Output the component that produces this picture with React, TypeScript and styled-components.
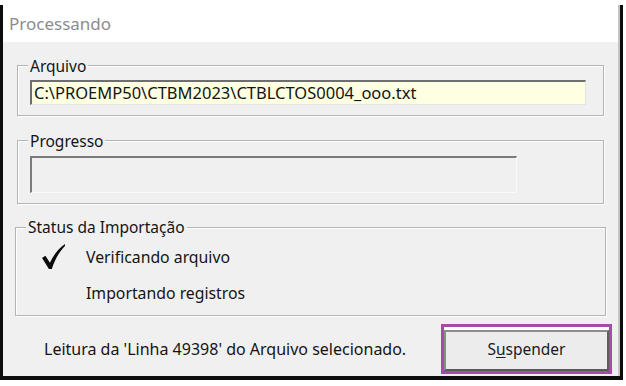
import React from 'react';
import styled, {createGlobalStyle} from 'styled-components';

const GlobalStyle = createGlobalStyle`
  html, body {
    margin: 0;
    padding: 0;
    background: #ffffff;
  }
  body {
    font-family: "Noto Sans", "Open Sans", sans-serif;
  }
`

function Check() {
    return (
        <svg width="23" height="25" viewBox="0 0 22 24">
            <path
                d="M0 13.5 L3.2 11.3 L7.6 18 C11 10.5 16 4.2 22 0 L22 1.8 C16.6 7.4 12.4 14.5 9.4 24 L6.6 24 Z"
                fill="#0b0b0b"
            />
        </svg>
    );
}

function App() {
    return (
        <Page>
            <GlobalStyle/>
            <Window>
                <TitleBar>Processando</TitleBar>
                <Body>
                    <GroupBox $top={23} $left={14} $right={16} $bottom={10}>
                        <Caption $after={5.5}>Arquivo</Caption>
                        <PathField>C:\PROEMP50\CTBM2023\CTBLCTOS0004_ooo.txt</PathField>
                    </GroupBox>

                    <GroupBox $top={24} $left={14} $right={16} $bottom={10}>
                        <Caption $after={6}>Progresso</Caption>
                        <ProgressBox/>
                    </GroupBox>

                    <GroupBox $top={23} $left={12} $right={14} $bottom={4}>
                        <Caption $after={2.5}>Status da Importação</Caption>
                        <StatusRow>
                            <Mark>
                                <Check/>
                            </Mark>
                            <StatusText>Verificando arquivo</StatusText>
                        </StatusRow>
                        <StatusRow>
                            <Mark/>
                            <StatusText>Importando registros</StatusText>
                        </StatusRow>
                    </GroupBox>

                    <Footer>
                        <Reading>Leitura da 'Linha 49398' do Arquivo selecionado.</Reading>
                        <Highlight>
                            <Button>S<u>u</u>spender</Button>
                        </Highlight>
                    </Footer>
                </Body>
            </Window>
        </Page>
    );
}

export default App;

const Page = styled.div`
  width: 626px;
  height: 386px;
  padding-top: 5px;
  box-sizing: border-box;
  overflow: hidden;
`

const Window = styled.div`
  width: 623px;
  height: 375px;
  box-sizing: border-box;
  border: 3px solid #0d0d0d;
  border-top: none;
  border-bottom-width: 4px;
  display: flex;
  flex-direction: column;
  box-shadow: inset -2px 0 0 #c4c4c4;
  background: #f0f0f0;
`

const TitleBar = styled.div`
  height: 37px;
  flex-shrink: 0;
  background: #ffffff;
  box-shadow: inset -2px 0 0 #c4c4c4;
  display: flex;
  align-items: center;
  padding-left: 6px;
  font-size: 17px;
  color: #8c8c8c;
`

const Body = styled.div`
  flex: 1;
  display: flex;
  flex-direction: column;
`

const GroupBox = styled.section<{ $top: number; $left: number; $right: number; $bottom: number }>`
  margin: ${p => p.$top}px ${p => p.$right}px 0 ${p => p.$left}px;
  padding: 0 16px ${p => p.$bottom}px 12px;
  display: flex;
  flex-direction: column;
  border: 1px solid #b4b4b4;
  box-shadow: inset 1px 1px 0 #ffffff, 1px 1px 0 #ffffff;
`

const Caption = styled.span<{ $after: number }>`
  align-self: flex-start;
  margin: -9.5px 0 ${p => p.$after}px -2px;
  padding: 0 2px;
  height: 18px;
  line-height: 18px;
  font-size: 15.5px;
  color: #141414;
  background: #f0f0f0;
`

const PathField = styled.div`
  height: 25px;
  box-sizing: border-box;
  margin-right: 1px;
  padding-left: 2px;
  background: #ffffe1;
  border-top: 2px solid #6e6e6e;
  border-left: 2px solid #6e6e6e;
  border-right: 1px solid #e3e3e3;
  border-bottom: 1px solid #e3e3e3;
  font-size: 16.5px;
  line-height: 22px;
  color: #141414;
  white-space: nowrap;
`

const ProgressBox = styled.div`
  width: 487px;
  height: 37px;
  box-sizing: border-box;
  border-top: 2px solid #7a7a7a;
  border-left: 2px solid #7a7a7a;
  border-right: 1px solid #fafafa;
  border-bottom: 1px solid #fafafa;
  background: #f0f0f0;
`

const StatusRow = styled.div`
  height: 36px;
  display: flex;
  align-items: center;
  padding-left: 14px;
  gap: 21px;
`

const Mark = styled.span`
  width: 23px;
  height: 25px;
  display: flex;
`

const StatusText = styled.span`
  font-size: 15.8px;
  color: #141414;
`

const Footer = styled.div`
  margin-top: 8.5px;
  height: 50px;
  display: flex;
  align-items: center;
  justify-content: space-between;
  padding: 0 8px 0 41px;
`

const Reading = styled.span`
  font-size: 16px;
  color: #141414;
`

const Highlight = styled.div`
  width: 171px;
  height: 50px;
  box-sizing: border-box;
  border: 3px solid #a44ca7;
  background: #ffffff;
  padding-top: 3px;
  display: flex;
`

const Button = styled.button`
  flex: 1;
  margin: 0;
  padding: 0 0 3px;
  border: 2px solid;
  border-color: #8c8c8c #5e5e5e #5a5a5a #8c8c8c;
  background: #ececec;
  font-family: "Noto Sans", "Open Sans", sans-serif;
  font-size: 15.5px;
  color: #1a1a28;

  u {
    text-underline-offset: 2px;
  }
`
